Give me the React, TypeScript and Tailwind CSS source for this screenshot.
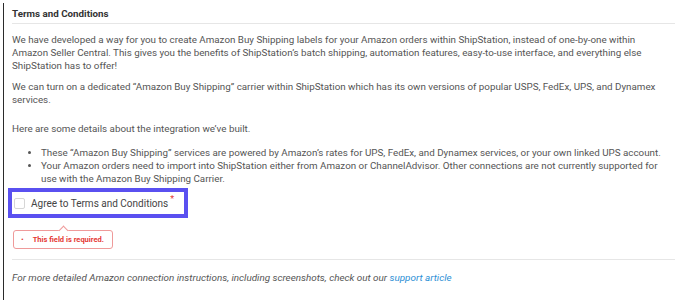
import React from "react";

export default function App() {
  return (
    <div className="w-[695px] h-[308px] bg-white overflow-hidden font-['Roboto',sans-serif] pt-[3px] pl-[3px]">
      <div className="border-l border-[#2b2b2b] h-[297px] pl-[8px] pr-[16px]">
        <div className="pt-[4px] text-[9.8px] font-bold text-[#333] leading-[13px]">Terms and Conditions</div>
        <div className="mt-[3px] h-px bg-[#e6e6e6] w-[663px]" />
        <div className="w-[652px] text-[9.8px] leading-[13px] text-[#555]">
          <p className="mt-[9px]">
            We have developed a way for you to create Amazon Buy Shipping labels for your Amazon orders within ShipStation, instead of one-by-one within Amazon Seller Central. This gives you the benefits of ShipStation’s batch shipping, automation features, easy-to-use interface, and everything else ShipStation has to offer!
          </p>
          <p className="mt-[8px]">
            We can turn on a dedicated “Amazon Buy Shipping” carrier within ShipStation which has its own versions of popular USPS, FedEx, UPS, and Dynamex services.
          </p>
          <p className="mt-[16px]">Here are some details about the integration we’ve built.</p>
          <ul className="mt-[11px] pl-[29px] list-disc">
            <li>These “Amazon Buy Shipping” services are powered by Amazon’s rates for UPS, FedEx, and Dynamex services, or your own linked UPS account.</li>
            <li>Your Amazon orders need to import into ShipStation either from Amazon or ChannelAdvisor. Other connections are not currently supported for use with the Amazon Buy Shipping Carrier.</li>
          </ul>
        </div>
        <div className="ml-[-4px] mt-[3px] w-[180px] h-[30px] border-[4px] border-[#5a50f0] flex items-center pl-[2px]">
          <div className="w-[11px] h-[11px] border border-[#d6d6d6] rounded-[2px] bg-white" />
          <span className="ml-[6px] text-[10px] text-[#444]">Agree to Terms and Conditions</span>
          <span className="ml-[2px] text-[9px] text-[#e53935] -mt-[6px]">*</span>
        </div>
        <div className="relative mt-[12px] ml-[1px] w-[100px] h-[19px] border border-[#ef9a9a] rounded-[3px] bg-white flex items-center">
          <div className="absolute -top-[4px] left-[46px] w-[7px] h-[7px] bg-white border-t border-l border-[#ef9a9a] rotate-45" />
          <span className="ml-[7px] text-[8px] text-[#e53935]">•</span>
          <span className="ml-[9px] text-[7.5px] font-bold text-[#e53935]">This field is required.</span>
        </div>
        <div className="mt-[10px] h-px bg-[#e6e6e6] w-[663px]" />
        <p className="mt-[11px] text-[9.9px] italic text-[#555] leading-[13px]">
          For more detailed Amazon connection instructions, including screenshots, check out our <span className="text-[#2d8fd5]">support article</span>
        </p>
      </div>
    </div>
  );
}
